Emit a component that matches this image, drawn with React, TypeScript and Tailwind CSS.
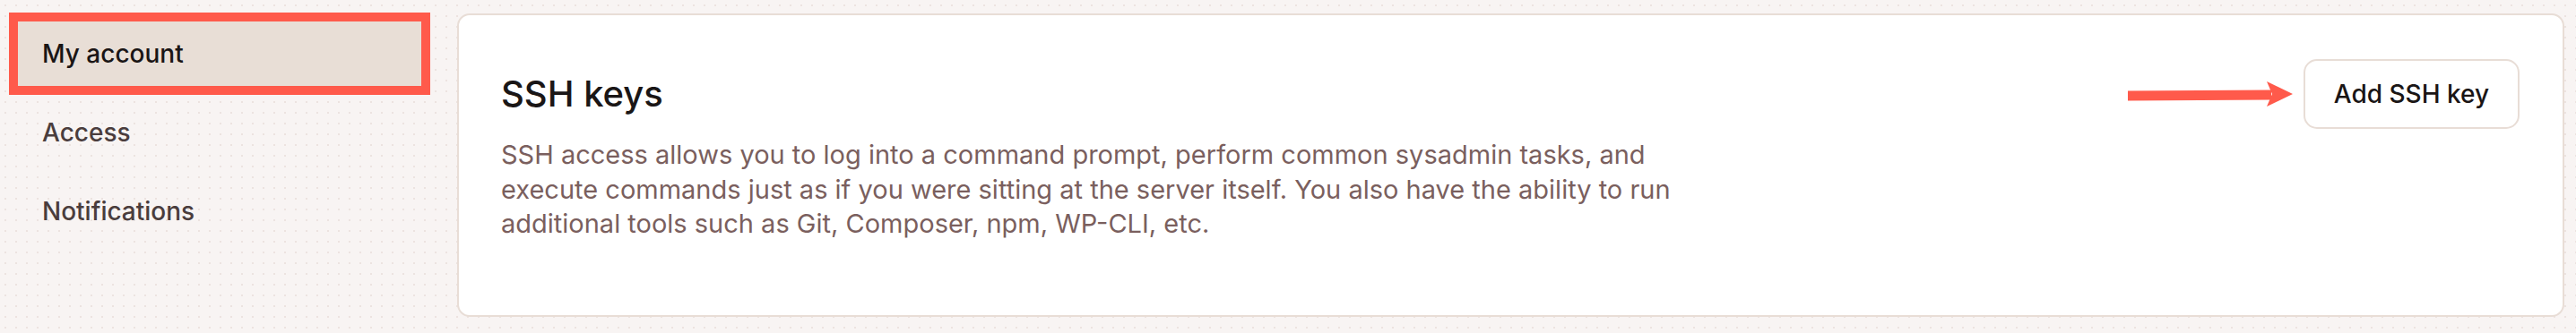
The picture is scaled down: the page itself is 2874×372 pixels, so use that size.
import React from "react";

function Arrow() {
  return (
    <svg width="184" height="28" viewBox="0 0 184 28" className="shrink-0">
      <path d="M0 10.5 L160 9.5 L160 20.5 L0 21.5 Z" fill="#ff5a4b" />
      <path d="M155 0 L184 14 L155 28 L161 14 Z" fill="#ff5a4b" />
    </svg>
  );
}

export default function App() {
  return (
    <div className="w-full h-[372px] flex pt-[15px] pl-[20px] pr-[13px] bg-[#f8f4f3] bg-[radial-gradient(#ece3e0_1px,transparent_1px)] bg-[size:12px_12px] font-['Inter','Noto_Sans',sans-serif]">
      <nav className="w-[450px] shrink-0 flex flex-col gap-[16px] pt-[9px]">
        <div className="h-[72px] flex items-center pl-[27px] bg-[#e8ded6] text-[28px] font-medium text-[#1a1515] outline-solid outline-[10px] outline-[#ff5a4b]">
          My account
        </div>
        <div className="h-[72px] flex items-center pl-[27px] text-[28px] font-medium text-[#4a3d3d]">
          Access
        </div>
        <div className="h-[72px] flex items-center pl-[27px] text-[28px] font-medium text-[#4a3d3d]">
          Notifications
        </div>
      </nav>
      <section className="ml-[40px] flex-1 self-start bg-white border-2 border-[#e8ddd6] rounded-[14px] pl-[47px] pr-[48px] pt-[49px] pb-[82px] flex justify-between items-start">
        <div>
          <h2 className="text-[40px] leading-[78px] font-medium text-[#1a1616]">SSH keys</h2>
          <p className="mt-[10px] text-[29px] leading-[38.5px] text-[#7a5f5e] whitespace-nowrap">
            SSH access allows you to log into a command prompt, perform common sysadmin tasks, and
            <br />
            execute commands just as if you were sitting at the server itself. You also have the ability to run
            <br />
            additional tools such as Git, Composer, npm, WP-CLI, etc.
          </p>
        </div>
        <div className="flex items-center gap-[12px]">
          <Arrow />
          <button className="h-[78px] px-[32px] border-2 border-[#e8ddd6] rounded-[15px] bg-white text-[28px] font-medium text-[#1a1515]">
            Add SSH key
          </button>
        </div>
      </section>
    </div>
  );
}
